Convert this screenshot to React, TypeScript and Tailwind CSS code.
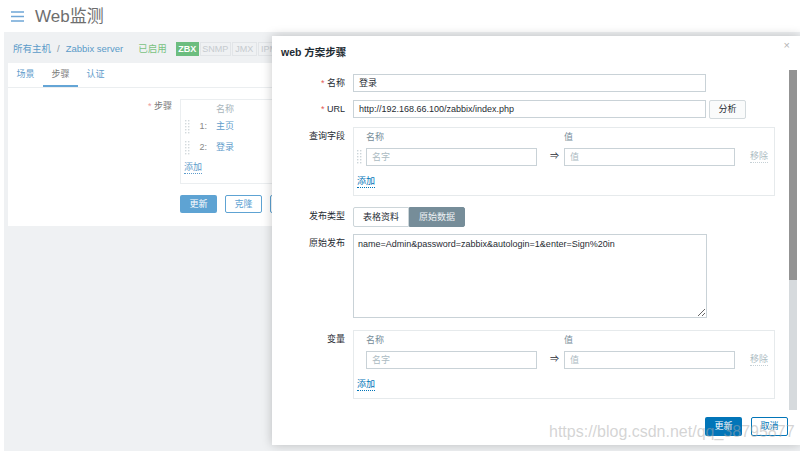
import React from "react";

function Grip({ className = "" }: { className?: string }) {
  const dots = [];
  for (let r = 0; r < 5; r++)
    for (let c = 0; c < 2; c++)
      dots.push(<rect key={`${r}-${c}`} x={c * 3} y={r * 3} width="1.4" height="1.4" />);
  return (
    <svg width="5" height="14" viewBox="0 0 5 14" fill="currentColor" className={className}>
      {dots}
    </svg>
  );
}

function Row({
  label,
  req,
  className = "",
  children,
}: {
  label: string;
  req?: boolean;
  className?: string;
  children: React.ReactNode;
}) {
  return (
    <div className={`flex ${className}`}>
      <div className="w-[73px] shrink-0 text-right leading-[18px]">
        {req && <span className="text-[#e45959]">* </span>}
        {label}
      </div>
      <div className="ml-[8px]">{children}</div>
    </div>
  );
}

function PairBox({ grip, className = "" }: { grip?: boolean; className?: string }) {
  return (
    <div className={`w-[422px] border border-[#e6eaec] pt-[1px] pb-[4px] ${className}`}>
      <div className="flex h-[18px] items-center pl-[12px] text-[#768d99]">
        <span className="w-[198px]">名称</span>
        <span>值</span>
      </div>
      <div className="mt-[1px] flex h-[18px] items-center pl-[3px]">
        <Grip className={grip ? "text-[#ccd5d9]" : "invisible"} />
        <div className="ml-[4px] h-[18px] w-[171px] border border-[#c9d2d7] px-[5px] leading-[16px] text-[#acbbc2]">
          名字
        </div>
        <div className="w-[27px] pl-[13px] text-[9px] text-[#1f2c33]">⇒</div>
        <div className="h-[18px] w-[171px] border border-[#c9d2d7] px-[5px] leading-[16px] text-[#acbbc2]">
          值
        </div>
        <span className="ml-[15px] border-b border-dotted border-[#c5d0d5] leading-[11px] text-[#acbbc2]">
          移除
        </span>
      </div>
      <div className="mt-[7px] flex h-[18px] items-center pl-[3px]">
        <span className="border-b border-dotted border-[#0275b8] leading-[11px] text-[#0275b8]">添加</span>
      </div>
    </div>
  );
}

export default function App() {
  return (
    <div className="relative h-[451px] w-[800px] overflow-hidden bg-white font-[Liberation_Sans,Noto_Sans_CJK_SC,sans-serif] text-[9px] text-[#1f2c33]">
      <header className="flex h-[32px] items-center pl-[11px]">
        <svg width="13" height="11" viewBox="0 0 13 11" className="text-[#6fa6d6]">
          <path d="M0 1h13M0 5.5h13M0 10h13" stroke="currentColor" strokeWidth="1.6" />
        </svg>
        <h1 className="ml-[11px] text-[17px] leading-none text-[#6e6e6e]">Web监测</h1>
      </header>

      <main className="ml-[4px] h-[419px] bg-[#eff1f3]">
        <div className="flex h-[31px] items-center pl-[9px] pt-[3px] text-[9.5px]">
          <span className="text-[#5b9bc9]">所有主机</span>
          <span className="mx-[6px] text-[#8a9aa4]">/</span>
          <span className="text-[#5b9bc9]">Zabbix server</span>
          <span className="ml-[15px] text-[#79c27f]">已启用</span>
          <div className="ml-[9px] flex gap-[1px] text-[9px]">
            <span className="h-[14px] w-[23px] bg-[#6cbd7f] text-center font-bold leading-[14px] text-white">ZBX</span>
            <span className="h-[14px] w-[31px] border border-[#e2e5e8] text-center leading-[12px] text-[#c6cbcf]">SNMP</span>
            <span className="h-[14px] w-[25px] border border-[#e2e5e8] text-center leading-[12px] text-[#c6cbcf]">JMX</span>
            <span className="h-[14px] w-[25px] border border-[#e2e5e8] text-center leading-[12px] text-[#c6cbcf]">IPMI</span>
          </div>
        </div>

        <section className="ml-[4px] mr-[8px] h-[163px] bg-white">
          <div className="flex h-[25px] border-b border-[#ebeef0]">
            <span className="flex items-center px-[8.5px] text-[#5f9ccb]">场景</span>
            <span className="flex items-center border-b-2 border-[#64a5d6] px-[8.5px] pt-[2px] text-[#7a7a7a]">步骤</span>
            <span className="flex items-center px-[8.5px] text-[#5f9ccb]">认证</span>
          </div>

          <div className="flex pt-[11px]">
            <div className="w-[164px] text-right leading-[15px] text-[#777]">
              <span className="text-[#ee9a9a]">* </span>步骤
            </div>
            <div className="ml-[8px] w-[260px] border border-[#ebeef0] pt-[3px] pb-[5px]">
              <div className="flex h-[13px] items-center pl-[35px] text-[#a9b5bb]">名称</div>
              {[
                ["1:", "主页"],
                ["2:", "登录"],
              ].map(([n, name]) => (
                <div key={n} className="flex h-[21px] items-center pl-[4px]">
                  <Grip className="text-[#d3d9dc]" />
                  <span className="w-[17px] text-right text-[#888]">{n}</span>
                  <span className="ml-[9px] text-[#5f9ccb]">{name}</span>
                </div>
              ))}
              <div className="flex h-[20px] items-center pl-[3px]">
                <span className="border-b border-dotted border-[#5f9ccb] leading-[11px] text-[#5f9ccb]">添加</span>
              </div>
            </div>
          </div>

          <div className="mt-[11px] ml-[172px] flex gap-[8px]">
            <span className="h-[18px] w-[37px] rounded-[2px] bg-[#5ea3d3] text-center leading-[18px] text-white">更新</span>
            <span className="h-[18px] w-[37px] rounded-[2px] border border-[#5ea3d3] text-center leading-[16px] text-[#5ea3d3]">克隆</span>
            <span className="h-[18px] w-[37px] rounded-[2px] border border-[#5ea3d3] text-center leading-[16px] text-[#5ea3d3]">删除</span>
          </div>
        </section>
      </main>

      <div className="absolute left-[272px] top-[36px] flex h-[409px] w-[528px] flex-col bg-white shadow-[0_0_10px_rgba(0,0,0,0.22)]">
        <div className="relative flex h-[34px] shrink-0 items-center pl-[9px] text-[10.5px] font-bold">
          web 方案步骤
          <span className="absolute right-[10px] top-[4px] text-[11px] font-normal leading-none text-[#b5b5b5]">×</span>
        </div>

        <div className="flex h-[340px] shrink-0">
          <div className="flex-1 pt-[4px]">
            <Row label="名称" req>
              <div className="h-[18px] w-[353px] border border-[#c9d2d7] px-[5px] leading-[16px]">登录</div>
            </Row>
            <Row label="URL" req className="mt-[8px]">
              <div className="flex">
                <div className="h-[18px] w-[353px] border border-[#c9d2d7] px-[5px] leading-[16px]">
                  http://192.168.66.100/zabbix/index.php
                </div>
                <span className="ml-[3px] h-[19px] w-[37px] rounded-[2px] border border-[#d3dadd] bg-[#fafbfb] text-center leading-[17px]">
                  分析
                </span>
              </div>
            </Row>
            <Row label="查询字段" className="mt-[8px]">
              <PairBox grip />
            </Row>
            <Row label="发布类型" className="mt-[11px]">
              <div className="flex h-[20px] leading-[18px]">
                <span className="w-[56px] rounded-l-[2px] border border-[#ccd5d9] text-center">表格资料</span>
                <span className="w-[56px] rounded-r-[2px] border border-[#768d99] bg-[#768d99] text-center text-[#eef2f4]">原始数据</span>
              </div>
            </Row>
            <Row label="原始发布" className="mt-[7px]">
              <textarea
                readOnly
                defaultValue="name=Admin&password=zabbix&autologin=1&enter=Sign%20in"
                className="block h-[84px] w-[354px] border border-[#c9d2d7] px-[4px] pt-[3px] font-[Liberation_Sans,Noto_Sans_CJK_SC,sans-serif] text-[9px] leading-[12px] text-[#1f2c33] outline-none"
              />
            </Row>
            <Row label="变量" className="mt-[12px]">
              <PairBox />
            </Row>
          </div>
          <div className="mr-[3px] w-[8px] bg-[#d6dadd]">
            <div className="h-[210px] bg-[#939393]" />
          </div>
        </div>

        <div className="flex flex-1 items-start justify-end gap-[9px] pr-[12px] pt-[7px]">
          <span className="h-[19px] w-[37px] rounded-[2px] bg-[#0275b8] text-center leading-[19px] text-white">更新</span>
          <span className="h-[19px] w-[37px] rounded-[2px] border border-[#0275b8] text-center leading-[17px] text-[#0275b8]">取消</span>
        </div>
      </div>

      <span className="pointer-events-none absolute left-[549px] top-[422px] text-[16px] leading-[20px] text-[rgba(170,170,170,0.5)]">
        https://blog.csdn.net/qq_38795877
      </span>
    </div>
  );
}
